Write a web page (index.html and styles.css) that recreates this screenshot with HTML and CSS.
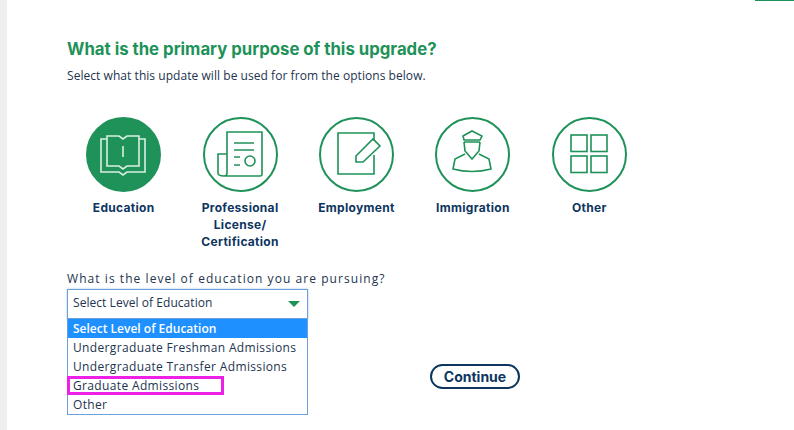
FILE: index.html
```html
<!DOCTYPE html>
<html lang="en">
<head>
    <meta charset="UTF-8">
    <meta name="viewport" content="width=device-width, initial-scale=1.0">
    <title>Purpose of upgrade</title>
    <link rel="stylesheet" href="styles.css">
</head>
<body>

    <div class="top-accent"></div>

    <div class="page">
        <h2 class="title">What is the primary purpose of this upgrade?</h2>
        <p class="subtitle">Select what this update will be used for from the options below.</p>

        <div class="purposes">
            <div class="purpose active">
                <svg class="purpose-icon" viewBox="0 0 75 75">
                    <circle class="ring" cx="37.5" cy="37.5" r="36.5"/>
                    <path d="M21 22H15V55H33L37 58L41 55H59V22H53"/>
                    <path d="M21 19H33L37 22L41 19H53V49H41L37 52L33 49H21Z"/>
                    <path d="M37 29V40"/>
                </svg>
                <div class="purpose-label">Education</div>
            </div>
            <div class="purpose">
                <svg class="purpose-icon" viewBox="0 0 75 75">
                    <circle class="ring" cx="37.5" cy="37.5" r="36.5"/>
                    <path d="M21 59H57Q59 59 59 57V15H24V56Q24 59 21 59Q15 59 15 56V37H24"/>
                    <path d="M31 26H51M31 33H51M31 40H37M31 48H37"/>
                    <circle cx="47" cy="44" r="5"/>
                </svg>
                <div class="purpose-label">Professional License/ Certification</div>
            </div>
            <div class="purpose">
                <svg class="purpose-icon" viewBox="0 0 75 75">
                    <circle class="ring" cx="37.5" cy="37.5" r="36.5"/>
                    <path d="M55 24V16H19V57H55V38"/>
                    <path d="M37 39L54 22L61 29L44 45H37Z"/>
                </svg>
                <div class="purpose-label">Employment</div>
            </div>
            <div class="purpose">
                <svg class="purpose-icon" viewBox="0 0 75 75">
                    <circle class="ring" cx="37.5" cy="37.5" r="36.5"/>
                    <path d="M28 19L37 14L47 19L45 23H29Z"/>
                    <path d="M29 25H45M29 25L30 34L37 42L44 34L45 25"/>
                    <path d="M30 37L20 42L18 52Q37 57 56 52L54 42L44 37"/>
                </svg>
                <div class="purpose-label">Immigration</div>
            </div>
            <div class="purpose">
                <svg class="purpose-icon" viewBox="0 0 75 75">
                    <circle class="ring" cx="37.5" cy="37.5" r="36.5"/>
                    <rect x="19" y="18" width="16" height="16.5"/>
                    <rect x="39" y="18" width="16" height="16.5"/>
                    <rect x="19" y="39" width="16" height="16.5"/>
                    <rect x="39" y="39" width="16" height="16.5"/>
                </svg>
                <div class="purpose-label">Other</div>
            </div>
        </div>

        <label class="level-label">What is the level of education you are pursuing?</label>

        <div class="level-select">
            <div class="select-box">
                <span class="select-value">Select Level of Education</span>
                <span class="select-arrow"></span>
            </div>
            <ul class="select-list">
                <li class="selected">Select Level of Education</li>
                <li>Undergraduate Freshman Admissions</li>
                <li>Undergraduate Transfer Admissions</li>
                <li>Graduate Admissions<span class="highlight"></span></li>
                <li>Other</li>
            </ul>
        </div>

        <div class="actions">
            <button class="continue-btn">Continue</button>
        </div>
    </div>

</body>
</html>
```

FILE: styles.css
```css
html,
body {
    height: 100%;
}

body {
    margin: 0;
    background-color: #fff;
    font-family: "Open Sans", Arial, sans-serif;
    color: #22344f;
    overflow: hidden;
    position: relative;
}

.top-accent {
    position: absolute;
    top: 0;
    right: 0;
    width: 39px;
    height: 1px;
    background-color: #1e9258;
}

.page {
    height: 100%;
    margin-left: 7px;
    padding: 39px 0 0 60px;
    box-shadow: -7px 0 0 #f0eeee;
    box-sizing: border-box;
}

.title {
    margin: 0;
    font-family: "Inter", Arial, sans-serif;
    font-size: 16.75px;
    line-height: 20px;
    font-weight: 700;
    color: #1e9258;
}

.subtitle {
    margin: 9px 0 0;
    font-size: 12px;
    line-height: 16px;
    letter-spacing: 0.05px;
}

.purposes {
    display: flex;
    gap: 26px;
    margin: 33px 0 0 11.5px;
}

.purpose {
    width: 90.4px;
    display: flex;
    flex-direction: column;
    align-items: center;
}

.purpose-icon {
    width: 75px;
    height: 75px;
    fill: none;
    stroke: #1e9258;
    stroke-width: 1.6;
}

.purpose-icon .ring {
    stroke-width: 2;
}

.purpose.active .purpose-icon {
    stroke: #d9efe3;
}

.purpose.active .ring {
    fill: #1e9258;
    stroke: #1e9258;
}

.purpose-label {
    margin-top: 7px;
    font-family: "Inter", Arial, sans-serif;
    font-size: 12px;
    line-height: 17px;
    font-weight: 700;
    letter-spacing: 0.3px;
    color: #0d3560;
    text-align: center;
}

.level-label {
    display: block;
    position: absolute;
    top: 271px;
    font-size: 12px;
    line-height: 16px;
    letter-spacing: 1.06px;
}

.level-select {
    position: absolute;
    top: 289px;
    width: 241px;
    font-size: 12px;
}

.select-box {
    height: 28px;
    padding: 0 7px 0 5px;
    display: flex;
    align-items: center;
    justify-content: space-between;
    background-color: #fff;
    border: 1px solid #6ca0dc;
    box-shadow: 0 0 2px #9cc3ee;
}

.select-value {
    margin-top: -3px;
    letter-spacing: 0.05px;
}

.select-arrow {
    width: 0;
    height: 0;
    margin-top: -1px;
    border-left: 6px solid transparent;
    border-right: 6px solid transparent;
    border-top: 6px solid #1e9258;
}

.select-list {
    list-style: none;
    margin: 0;
    padding: 0;
    background-color: #fff;
    border: 1px solid #6ca0dc;
    border-top: none;
}

.select-list li {
    position: relative;
    height: 19px;
    line-height: 19px;
    padding-left: 5px;
    letter-spacing: 0.35px;
}

.select-list .selected {
    background-color: #1e90ff;
    color: #fff;
    font-weight: 600;
    letter-spacing: 0;
}

.highlight {
    position: absolute;
    top: 0;
    left: -1px;
    width: 157px;
    height: 19px;
    border: 3px solid #ee1fe6;
    box-sizing: border-box;
}

.actions {
    position: absolute;
    top: 364px;
    left: 430px;
}

.continue-btn {
    width: 90px;
    height: 25px;
    padding: 0;
    background-color: #fff;
    border: 2px solid #0d3560;
    border-radius: 13px;
    font-family: "Inter", Arial, sans-serif;
    font-size: 14px;
    font-weight: 700;
    color: #0d3560;
}
```
